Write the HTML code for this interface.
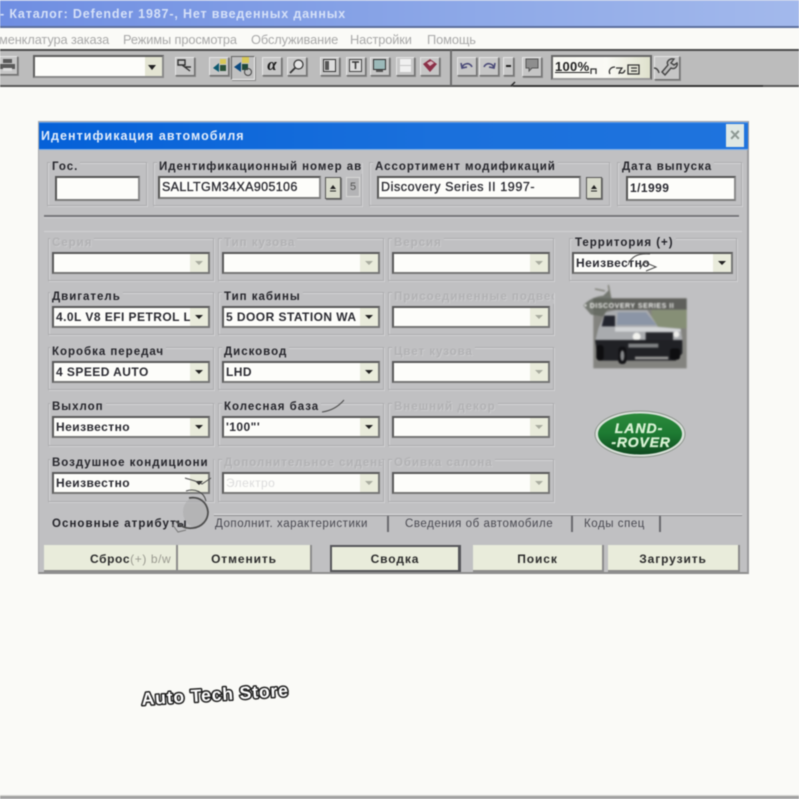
<!DOCTYPE html>
<html lang="ru">
<head>
<meta charset="utf-8">
<title>Каталог</title>
<style>
html,body{margin:0;padding:0;width:799px;height:799px;overflow:hidden;background:#fafaf7}
body{font-family:"Liberation Sans","Noto Sans CJK SC",sans-serif;position:relative}
#w{position:absolute;left:0;top:0;width:799px;height:799px;filter:blur(.45px);overflow:hidden}
#w div,#w span.a{position:absolute;box-sizing:border-box}
.m{top:32px;font-size:12.8px;color:#a9a9a9;white-space:nowrap;letter-spacing:-.1px}
.b{background:#c6c6c6;border:1px solid;border-color:#e4e4e4 #6c6c6c #6c6c6c #e4e4e4;box-shadow:1px 1px 0 #8a8a8a;top:57px;height:19px}
.g{border:1px solid #adadaf;box-shadow:inset 1px 1px 0 #d4d4d6,1px 1px 0 #d0d0d2}
.l{font-weight:bold;font-size:11.5px;color:#26262c;white-space:nowrap;background:#c0c0c2;padding:0 2px;letter-spacing:.98px;line-height:13px;height:13px;margin-top:2px}
.d{text-shadow:1px 1px 0 #cbcbcd;color:#b2b2b4}
.i{background:#fdfdfa;border:2px solid;border-color:#565656 #8a8a8a #7c7c7c #565656;font-size:12px;font-weight:bold;color:#2b2b32;line-height:18px;padding-left:2px;white-space:nowrap;overflow:hidden;letter-spacing:.45px}
.c{background:#fdfdfa;border:2px solid;border-color:#5a5a5a #777 #777 #5a5a5a;height:22px;width:158px;font-size:12px;font-weight:bold;color:#2b2b32;line-height:18px;padding-left:2px;white-space:nowrap;overflow:hidden;letter-spacing:.45px}
.c i{position:absolute;right:0;top:0;width:18px;height:18px;background:#e9ebdb}
.c i:after{content:"";position:absolute;left:5px;top:7px;border:4px solid transparent;border-top:4px solid #222;border-bottom:0}
.c.x i:after{border-top-color:#a9aca0}
.s{background:#d8dacb;border:1px solid #555;box-shadow:1px 1px 0 #777}
.t{top:518px;font-size:11.5px;color:#4a4a52;white-space:nowrap;letter-spacing:.55px;line-height:13px;margin-top:0}
.tl{top:516px;width:2px;height:16px;background:#6a6a6e}
.bt{top:545px;height:27px;background:#e9ecdb;border-bottom:2px solid #8c8c8c;border-right:2px solid #8c8c8c;text-align:center;font-size:12px;font-weight:bold;color:#2d2d2d;line-height:28px;letter-spacing:.9px}
</style>
</head>
<body>
<div id="w">
<!-- title bar -->
<div style="left:0;top:0;width:799px;height:28px;background:linear-gradient(90deg,#6f8ee2,#8ea9e8 60%,#a3b9ec);border-bottom:2px solid #5c6f9e;border-top:1px solid #b8c6ea"></div>
<div style="left:0;top:7px;font-size:12.5px;font-weight:bold;color:#d5e0f7;white-space:nowrap;letter-spacing:.84px;line-height:15px">- Каталог: Defender 1987-, Нет введенных данных</div>
<!-- menu -->
<div class="m" style="left:-1px">менклатура заказа</div>
<div class="m" style="left:123px">Режимы просмотра</div>
<div class="m" style="left:251px">Обслуживание</div>
<div class="m" style="left:350px">Настройки</div>
<div class="m" style="left:427px">Помощь</div>
<!-- toolbar -->
<div style="left:0;top:49px;width:799px;height:38px;background:#bcbcbc;border-top:2px solid #4c4c4c;border-bottom:2px solid #5a5a5a"></div>
<div style="left:450px;top:50px;width:2px;height:36px;background:#6e6e6e"></div>
<div class="b" style="left:-2px;width:20px;top:56px"></div>
<svg style="position:absolute;left:0;top:58px" width="16" height="14"><path d="M3 1h9v4H3zM0 6h15v5H0z" fill="#5a5a5a"/><rect x="3" y="10" width="9" height="3" fill="#ddd"/></svg>
<div class="i" style="left:33px;top:55px;width:131px;height:23px;border-color:#5e5e5e #8a8a8a #8a8a8a #5e5e5e"></div>
<div style="left:145px;top:57px;width:17px;height:19px;background:#e4e5d3"></div>
<div style="left:147px;top:65px;border:4px solid transparent;border-top:5px solid #222;border-bottom:0;width:0;height:0;margin-left:1px"></div>
<div class="b" style="left:175px;width:20px"></div>
<svg style="position:absolute;left:177px;top:59px" width="16" height="14"><path d="M1 1h7v5H1zM5 6l8 6M8 8h6" fill="none" stroke="#333" stroke-width="1.4"/></svg>
<div class="b" style="left:209px;width:20px"></div>
<svg style="position:absolute;left:212px;top:59px" width="16" height="14"><rect x="8" y="0" width="6" height="5" fill="#d8c858"/><path d="M1 9l6-5v9z" fill="#0d5a70"/><rect x="8" y="6" width="6" height="6" fill="#2c5238"/></svg>
<div class="b" style="left:231px;width:24px;top:56px;height:24px;border-color:#666 #eee #eee #666;background:#c0c0c0"></div>
<svg style="position:absolute;left:233px;top:57px" width="20" height="20"><rect x="9" y="0" width="7" height="6" fill="#d8c858"/><path d="M1 10l7-5v10z" fill="#0d4a80"/><rect x="9" y="7" width="6" height="6" fill="#1f4a3a"/><circle cx="15" cy="15" r="3.5" fill="none" stroke="#444"/></svg>
<div class="b" style="left:262px;width:20px"></div>
<div style="left:264px;top:56px;width:16px;text-align:center;font:italic bold 17px 'Liberation Serif',serif;color:#1a1a1a;line-height:18px">α</div>
<div class="b" style="left:287px;width:20px"></div>
<svg style="position:absolute;left:289px;top:59px" width="16" height="15"><circle cx="9.5" cy="5.5" r="4.5" fill="#e4e4e4" stroke="#333" stroke-width="1.2"/><path d="M6 9l-5 5" stroke="#333" stroke-width="1.8"/></svg>
<div class="b" style="left:320px;width:20px"></div>
<svg style="position:absolute;left:323px;top:59px" width="14" height="14"><rect x=".5" y=".5" width="12" height="12" fill="#ddd" stroke="#333"/><rect x="2" y="2" width="4" height="9" fill="#555"/></svg>
<div class="b" style="left:346px;width:20px"></div>
<svg style="position:absolute;left:349px;top:59px" width="14" height="14"><rect x=".5" y=".5" width="12" height="12" fill="#ddd" stroke="#444"/><path d="M3 3h7M6.500 3v7" stroke="#333" stroke-width="1.5"/></svg>
<div class="b" style="left:370px;width:20px"></div>
<svg style="position:absolute;left:373px;top:59px" width="14" height="14"><rect x=".5" y=".5" width="12" height="10" fill="#9bb9b9" stroke="#333"/><rect x="3" y="11" width="7" height="2" fill="#555"/></svg>
<div class="b" style="left:396px;width:19px"></div>
<svg style="position:absolute;left:399px;top:59px" width="13" height="14"><rect x="1" y="0" width="11" height="6" fill="#f0f0f0"/><rect x="1" y="7" width="11" height="6" fill="#f0f0f0"/></svg>
<div class="b" style="left:420px;width:20px"></div>
<svg style="position:absolute;left:422px;top:58px" width="16" height="16"><path d="M1 6l7-5 7 5-7 8z" fill="#8c3048"/><path d="M5 5l4-2 3 2-4 3z" fill="#d8b8c0"/></svg>
<div class="b" style="left:457px;width:20px"></div>
<svg style="position:absolute;left:459px;top:60px" width="16" height="12"><path d="M3 8c1-5 8-6 10-1M2 3l1 5 5-1" fill="none" stroke="#4a4a78" stroke-width="1.600"/></svg>
<div class="b" style="left:479px;width:20px"></div>
<svg style="position:absolute;left:481px;top:60px" width="16" height="12"><path d="M13 8c-1-5-8-6-10-1M14 3l-1 5-5-1" fill="none" stroke="#4a4a78" stroke-width="1.600"/></svg>
<div class="b" style="left:503px;width:11px"></div>
<div style="left:506px;top:65px;width:5px;height:2px;background:#222"></div>
<div class="b" style="left:522px;width:20px;height:20px"></div>
<svg style="position:absolute;left:524px;top:58px" width="16" height="16"><path d="M2 1h12v9H8l-3 3v-3H2z" fill="#8e8e8e" stroke="#555"/></svg>
<div style="left:551px;top:55px;width:101px;height:25px;background:linear-gradient(90deg,#f6f6f0,#fafaf5 55%,#dfe1cd);border:2px solid;border-color:#666 #666 #999 #666"></div>
<div style="left:555px;top:59px;font-size:13px;font-weight:bold;color:#222;line-height:15px;letter-spacing:.3px;text-decoration:underline">100%</div>
<svg style="position:absolute;left:590px;top:58px" width="62" height="20"><path d="M1 16v-5h5v5M20 16c-2-4 1-7 5-7M26 10h6c-1 2-3 3-3 6M29 14c3 2 5 1 6-2M38 7h11v9h-11zM41 10h6M41 13h6" fill="none" stroke="#333" stroke-width="1.300"/></svg>
<div class="b" style="left:654px;width:26px;top:56px;height:24px"></div>
<svg style="position:absolute;left:652px;top:58px" width="30" height="22"><path d="M2 10c2 0 4 1 5 5M22 1c-5-1-8 3-6 6l-6 7 3 3 6-7c4 2 7-2 6-5l-3 2-3-2z" fill="#bcbcbc" stroke="#444" stroke-width="1.400"/></svg>
<svg style="position:absolute;left:505px;top:78px" width="300" height="10"><path d="M6 8l4-4M8 8h250" fill="none" stroke="#2c2c2c" stroke-width="1.500"/></svg>

<!-- dialog -->
<div style="left:38px;top:121px;width:711px;height:453px;background:#c0c0c2;border:1px solid #a9a9ab;border-right:2px solid #9b9b9d;border-bottom:2px solid #8e8e8e"></div>
<div style="left:39px;top:122px;width:709px;height:28px;background:linear-gradient(90deg,#0561d8,#1a70dc 55%,#1f74de);border-bottom:1px solid #7fb0ea;border-top:1px solid #5a9ae8"></div>
<div style="left:41px;top:129px;font-size:12.500px;font-weight:bold;color:#e2ecfa;white-space:nowrap;letter-spacing:1.05px;line-height:14px">Идентификация автомобиля</div>
<div style="left:726px;top:124px;width:18px;height:23px;background:#dfe8e4;text-align:center;color:#8f9a95;font-size:18px;line-height:22px;font-weight:bold">×</div>

<!-- top row -->
<div class="g" style="left:47px;top:162px;width:100px;height:44px"></div>
<div class="l" style="left:50px;top:159px">Гос.</div>
<div class="i" style="left:55px;top:176px;width:85px;height:25px"></div>

<div class="g" style="left:153px;top:162px;width:209px;height:44px"></div>
<div class="l" style="left:157px;top:159px;width:205px;overflow:hidden;letter-spacing:.95px">Идентификационный номер ав</div>
<div class="i" style="left:158px;top:176px;width:163px;height:23px;line-height:19px;font-weight:normal;font-size:12.5px;-webkit-text-stroke:.3px #2b2b32;letter-spacing:.35px">SALLTGM34XA905106</div>
<div class="s" style="left:325px;top:177px;width:16px;height:22px"><svg width="14" height="20" style="display:block"><path d="M4 11l3-4 3 4z" fill="#222"/><path d="M4 13h6" stroke="#222"/></svg></div>
<div style="left:346px;top:177px;width:14px;height:20px;background:#b4b4b6;border:1px solid #d8d8d8;text-align:center;font-size:11px;color:#555;line-height:18px">5</div>

<div class="g" style="left:369px;top:162px;width:241px;height:44px"></div>
<div class="l" style="left:373px;top:159px">Ассортимент модификаций</div>
<div class="i" style="left:377px;top:176px;width:204px;height:23px;line-height:19px;font-weight:normal;font-size:12.500px;-webkit-text-stroke:.3px #2b2b32;letter-spacing:.58px">Discovery Series II 1997-</div>
<div class="s" style="left:586px;top:177px;width:16px;height:22px"><svg width="14" height="20" style="display:block"><path d="M4 11l3-4 3 4z" fill="#222"/><path d="M4 13h6" stroke="#222"/></svg></div>

<div class="g" style="left:617px;top:162px;width:125px;height:44px"></div>
<div class="l" style="left:620px;top:159px">Дата выпуска</div>
<div class="i" style="left:626px;top:176px;width:110px;height:25px;line-height:21px">1/1999</div>

<div style="left:44px;top:215px;width:695px;height:3px;background:#77777a;border-bottom:1px solid #d4d4d6"></div>
<div style="left:44px;top:231px;width:698px;height:1px;background:#d2d2d4"></div>

<!-- row 1 -->
<div class="g" style="left:48px;top:238px;width:166px;height:43px"></div>
<div class="l d" style="left:50px;top:235px">Серия</div>
<div class="c x" style="left:52px;top:252px"><i></i></div>
<div class="g" style="left:218px;top:238px;width:166px;height:43px"></div>
<div class="l d" style="left:222px;top:235px">Тип кузова</div>
<div class="c x" style="left:222px;top:252px"><i></i></div>
<div class="g" style="left:388px;top:238px;width:166px;height:43px"></div>
<div class="l d" style="left:392px;top:235px">Версия</div>
<div class="c x" style="left:392px;top:252px"><i></i></div>
<div class="g" style="left:569px;top:238px;width:168px;height:43px"></div>
<div class="l" style="left:573px;top:235px">Территория (+)</div>
<div class="c" style="left:572px;top:252px;width:161px">Неизвестно<i></i></div>

<!-- row 2 -->
<div class="g" style="left:48px;top:292px;width:166px;height:43px"></div>
<div class="l" style="left:50px;top:289px">Двигатель</div>
<div class="c" style="left:52px;top:306px">4.0L V8 EFI PETROL L<i></i></div>
<div class="g" style="left:218px;top:292px;width:166px;height:43px"></div>
<div class="l" style="left:222px;top:289px">Тип кабины</div>
<div class="c" style="left:222px;top:306px">5 DOOR STATION WA<i></i></div>
<div class="g" style="left:388px;top:292px;width:166px;height:43px"></div>
<div class="l d" style="left:392px;top:289px;width:162px;overflow:hidden">Присоединенные подвески</div>
<div class="c x" style="left:392px;top:306px"><i></i></div>

<!-- row 3 -->
<div class="g" style="left:48px;top:347px;width:166px;height:43px"></div>
<div class="l" style="left:50px;top:344px">Коробка передач</div>
<div class="c" style="left:52px;top:361px">4 SPEED AUTO<i></i></div>
<div class="g" style="left:218px;top:347px;width:166px;height:43px"></div>
<div class="l" style="left:222px;top:344px">Дисковод</div>
<div class="c" style="left:222px;top:361px">LHD<i></i></div>
<div class="g" style="left:388px;top:347px;width:166px;height:43px"></div>
<div class="l d" style="left:392px;top:344px">Цвет кузова</div>
<div class="c x" style="left:392px;top:361px"><i></i></div>

<!-- row 4 -->
<div class="g" style="left:48px;top:403px;width:166px;height:43px"></div>
<div class="l" style="left:50px;top:399px">Выхлоп</div>
<div class="c" style="left:52px;top:416px">Неизвестно<i></i></div>
<div class="g" style="left:218px;top:403px;width:166px;height:43px"></div>
<div class="l" style="left:222px;top:399px">Колесная база</div>
<div class="c" style="left:222px;top:416px">'100"'<i></i></div>
<div class="g" style="left:388px;top:403px;width:166px;height:43px"></div>
<div class="l d" style="left:392px;top:399px">Внешний декор</div>
<div class="c x" style="left:392px;top:416px"><i></i></div>

<!-- row 5 -->
<div class="g" style="left:48px;top:459px;width:166px;height:43px"></div>
<div class="l" style="left:50px;top:455px;width:163px;overflow:hidden">Воздушное кондициони</div>
<div class="c" style="left:52px;top:472px">Неизвестно<i></i></div>
<div class="g" style="left:218px;top:459px;width:166px;height:43px"></div>
<div class="l d" style="left:222px;top:455px;width:160px;overflow:hidden">Дополнительное сиденье</div>
<div class="c x" style="left:222px;top:472px;color:#dcdcdc;font-weight:normal">Электро<i></i></div>
<div class="g" style="left:388px;top:459px;width:166px;height:43px"></div>
<div class="l d" style="left:392px;top:455px">Обивка салона</div>
<div class="c x" style="left:392px;top:472px"><i></i></div>

<!-- car image -->
<svg style="position:absolute;left:575px;top:285px;filter:blur(.8px)" width="125" height="95" viewBox="0 0 375 285">
<rect x="55" y="40" width="280" height="210" fill="#83837f"/>
<rect x="230" y="70" width="105" height="60" fill="#868f76"/>
<path d="M55 40h280v34H55z" fill="#5f605c"/>
<path d="M25 62c15-20 40-28 60-30l18-18 10 40-30 40-35-5z" fill="#62665e" opacity=".8"/>
<path d="M60 12l30 6M100 0l6 35" stroke="#77786f" stroke-width="4" fill="none"/>
<path d="M70 130l22-48 30-7h95l32 50 68 6 6 40H60z" fill="#a9abae"/>
<path d="M128 82h85l32 38H125z" fill="#8b95a6"/>
<path d="M88 92h32v32H80z" fill="#23252e"/>
<path d="M120 126h125l72 6v8H120z" fill="#d2d4d6"/>
<path d="M212 142h82v25h-82z" fill="#26272c"/>
<circle cx="185" cy="155" r="12" fill="#f2f2ee"/><circle cx="304" cy="148" r="9" fill="#ececea"/>
<path d="M60 165h262v40l-20 22H70z" fill="#202125"/>
<path d="M160 176h90v12h-90z" fill="#7e8082"/>
<rect x="64" y="180" width="22" height="46" rx="9" fill="#0e0e10"/>
<rect x="130" y="185" width="24" height="52" rx="10" fill="#111114"/><ellipse cx="142" cy="212" rx="6" ry="16" fill="#86888a"/>
<rect x="285" y="190" width="30" height="34" rx="8" fill="#0e0e10"/>
<rect x="180" y="215" width="100" height="8" fill="#9a9a98"/>
<text x="28" y="69" font-family="Liberation Sans" font-size="21" font-weight="bold" fill="#f0f0ee" letter-spacing="1.600">• DISCOVERY SERIES II</text>
</svg>

<!-- logo -->
<svg style="position:absolute;left:592px;top:408px" width="96" height="52">
<ellipse cx="48" cy="26" rx="45" ry="23" fill="#d8e0d8" stroke="#8b938b"/>
<defs><linearGradient id="g" x1="0" y1="0" x2="0" y2="1"><stop offset="0" stop-color="#2b8a3c"/><stop offset=".5" stop-color="#1d7a32"/><stop offset="1" stop-color="#0f4a20"/></linearGradient></defs>
<ellipse cx="48" cy="26" rx="42" ry="20.500" fill="url(#g)"/>
<text x="47" y="25" text-anchor="middle" font-family="Liberation Sans" font-size="14" font-weight="bold" font-style="italic" fill="#d6f0d2" stroke="#d6f0d2" stroke-width=".35" letter-spacing="1">LAND-</text>
<text x="49" y="39" text-anchor="middle" font-family="Liberation Sans" font-size="14" font-weight="bold" font-style="italic" fill="#d6f0d2" stroke="#d6f0d2" stroke-width=".35" letter-spacing=".8">-ROVER</text>
</svg>

<!-- tabs -->
<div style="left:214px;top:514px;width:528px;height:2px;background:#e2e2e4;border-bottom:1px solid #8a8a8c"></div>
<div class="t" style="left:52px;color:#24242a;font-weight:bold;top:518px;letter-spacing:1.05px">Основные атрибуты</div>
<div class="t" style="left:215px">Дополнит. характеристики</div>
<div class="tl" style="left:387px"></div>
<div class="t" style="left:405px">Сведения об автомобиле</div>
<div class="tl" style="left:571px"></div>
<div class="t" style="left:584px">Коды спец</div>
<div class="tl" style="left:659px"></div>

<!-- scribbles -->
<svg style="position:absolute;left:0;top:0" width="799" height="799">
<ellipse cx="196" cy="512" rx="13" ry="15" fill="#a9a9ab" opacity=".55"/>
<g fill="none" stroke="#4c4c4c" stroke-width="1">
<path d="M185 478c6 2 12 3 17 6 3-2 6-4 9-6"/>
<path d="M186 491c9-3 18 1 20 10"/>
<path d="M189 498c10-2 18 4 19 14 0 8-6 15-15 16-7 1-13-2-17-7" stroke-width="1.700"/>
<path d="M172 524l6 8 8-2" stroke="#777"/>
<path d="M322 412c8-1 16-5 22-12"/>
<path d="M628 265c3-8 9-12 22-11M640 269l4-7 12 5-10 4"/>
</g></svg>

<!-- buttons -->
<div class="bt" style="left:44px;width:134px;padding-left:46px;text-align:left;letter-spacing:.6px">Сброс<span style="color:#9a9a90;font-weight:normal">(+) b/w</span></div>
<div class="bt" style="left:178px;width:134px">Отменить</div>
<div class="bt" style="left:330px;width:131px;border:2px solid #55565a;border-right:3px solid #55565a;line-height:24px">Сводка</div>
<div class="bt" style="left:473px;width:131px">Поиск</div>
<div class="bt" style="left:608px;width:132px">Загрузить</div>

<!-- watermark -->
<svg style="position:absolute;left:130px;top:670px" width="175" height="50">
<text x="12" y="35" transform="rotate(-3.500 12 35)" font-family="Liberation Sans" font-size="17.500" font-weight="bold" fill="#fff" stroke="#222" stroke-width="3" paint-order="stroke" stroke-linejoin="round" letter-spacing=".9">Auto Tech Store</text>
</svg>

<!-- bottom line -->
<div style="left:0;top:795px;width:799px;height:1px;background:#d8d8d4"></div>
<div style="left:0;top:796px;width:799px;height:3px;background:#a2a2a2"></div>
</div>
</body>
</html>
